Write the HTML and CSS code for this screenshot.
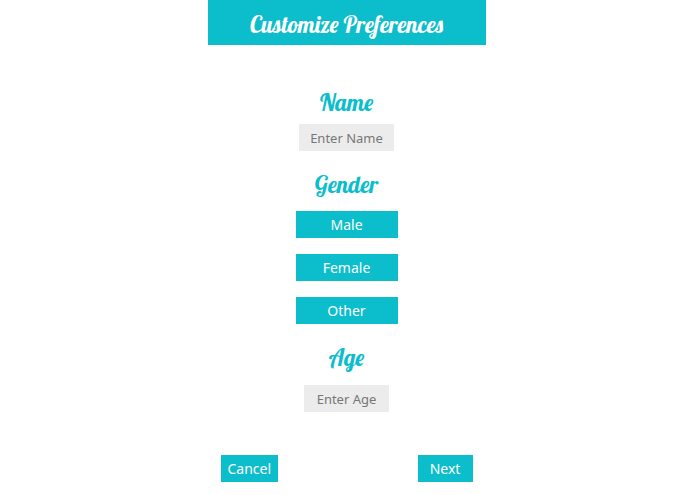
FILE: index.html
```html
<!DOCTYPE html>
<html lang="en">
<head>
<meta charset="utf-8">
<meta name="viewport" content="width=device-width, initial-scale=1">
<title>Customize Preferences</title>
<link rel="stylesheet" href="styles.css">
</head>
<body>
<main class="app">
  <header class="header"><h1 class="title">Customize Preferences</h1></header>
  <form class="form">
    <div class="group">
      <label class="heading" for="name">Name</label>
      <input class="field field-name" id="name" type="text" placeholder="Enter Name">
    </div>
    <div class="group choices" role="group" aria-labelledby="gender">
      <h2 class="heading" id="gender">Gender</h2>
      <button class="button" type="button">Male</button>
      <button class="button" type="button">Female</button>
      <button class="button" type="button">Other</button>
    </div>
    <div class="group group-age">
      <label class="heading" for="age">Age</label>
      <input class="field field-age" id="age" type="text" inputmode="numeric" placeholder="Enter Age">
    </div>
    <footer class="actions">
      <button class="button" type="button">Cancel</button>
      <button class="button button-next" type="submit">Next</button>
    </footer>
  </form>
</main>
</body>
</html>
```
FILE: styles.css
```css
* {
  box-sizing: border-box;
}

body {
  margin: 0;
  padding-right: 2px;
  background: #fff;
  font-family: "Droid Sans", "Noto Sans", "Open Sans", sans-serif;
  font-size: 14px;
}

.app {
  width: 40%;
  min-width: 278px;
  margin: 0 auto;
}

.header {
  padding: 10px 0 5px;
  background: #0cbdcb;
  text-align: center;
}

.title,
.heading {
  margin: 0;
  color: #0cbdcb;
  font-family: Lobster, "Liberation Serif", serif;
  font-size: 23px;
  font-weight: normal;
  line-height: 30px;
}

.title {
  color: #fff;
}

.form {
  display: flex;
  flex-direction: column;
  gap: 19px;
  padding: 43px 13px 13px;
}

.group {
  display: flex;
  flex-direction: column;
  align-items: center;
  gap: 6px;
}

.choices {
  gap: 16px;
}

.choices .heading {
  margin-bottom: -5px;
}

.choices .button {
  width: 102px;
}

.group-age {
  gap: 12px;
}

.field,
.button {
  height: 27px;
  border: 0;
  border-radius: 0;
  font: inherit;
}

.field {
  padding: 1px 4px 0;
  background: #ececec;
  color: #777;
  font-size: 13px;
  text-align: center;
}

.field::placeholder {
  color: #777;
}

.field-name {
  width: 95px;
}

.field-age {
  width: 85px;
}

.button {
  padding: 0 7px;
  background: #0cbdcb;
  color: #fff;
  cursor: pointer;
}

.button-next {
  width: 55px;
}

.actions {
  display: flex;
  justify-content: space-between;
  margin-top: 24px;
}
```
